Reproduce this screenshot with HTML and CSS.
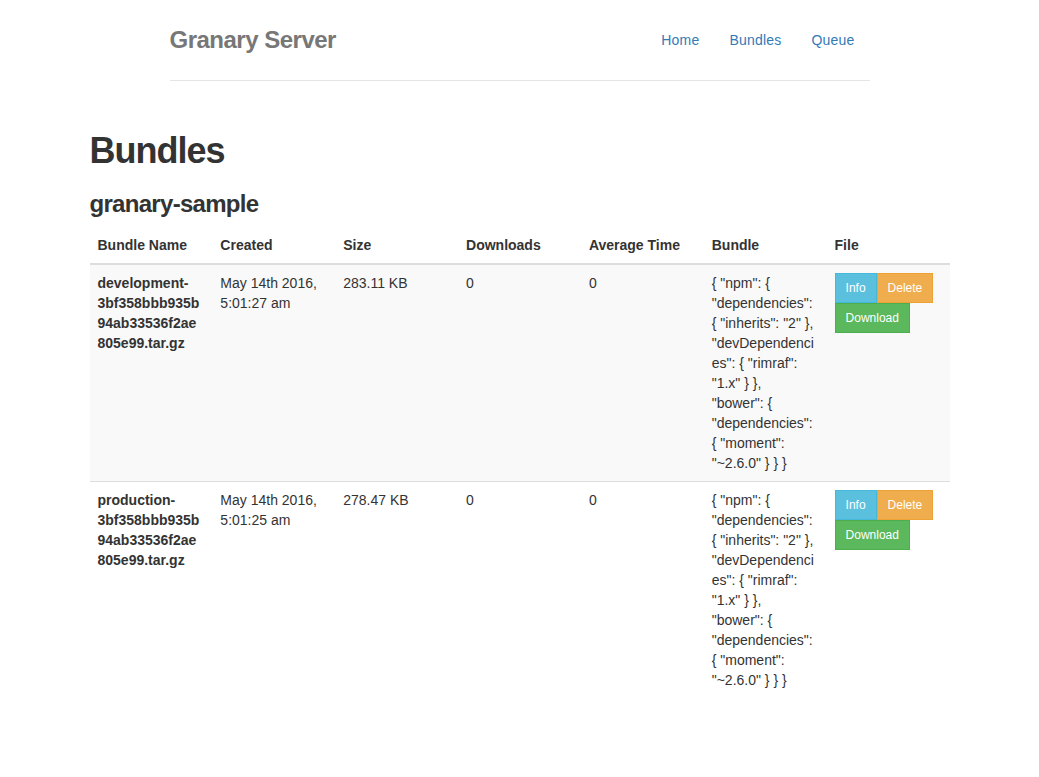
FILE: index.html
```html
<!DOCTYPE html>
<html lang="en">
<head>
<meta charset="utf-8">
<title>Granary Server</title>
<link rel="stylesheet" href="styles.css">
</head>
<body>
<div class="header-wrap">
  <header class="header">
    <h3 class="brand">Granary Server</h3>
    <nav class="nav">
      <a href="#">Home</a>
      <a href="#">Bundles</a>
      <a href="#">Queue</a>
    </nav>
  </header>
</div>
<main class="container">
  <h1 class="page-title">Bundles</h1>
  <h3 class="group-title">granary-sample</h3>
  <table class="table">
    <thead>
      <tr>
        <th>Bundle Name</th>
        <th>Created</th>
        <th>Size</th>
        <th>Downloads</th>
        <th>Average Time</th>
        <th>Bundle</th>
        <th>File</th>
      </tr>
    </thead>
    <tbody>
      <tr class="striped">
        <td class="name">development-3bf358bbb935b94ab33536f2ae805e99.tar.gz</td>
        <td>May 14th 2016, 5:01:27 am</td>
        <td>283.11 KB</td>
        <td>0</td>
        <td>0</td>
        <td class="json">{ "npm": { "dependencies": { "inherits": "2" }, "devDependencies": { "rimraf": "1.x" } }, "bower": { "dependencies": { "moment": "~2.6.0" } } }</td>
        <td>
          <div class="actions">
            <button class="btn btn-info">Info</button><button class="btn btn-warning">Delete</button><button class="btn btn-success">Download</button>
          </div>
        </td>
      </tr>
      <tr>
        <td class="name">production-3bf358bbb935b94ab33536f2ae805e99.tar.gz</td>
        <td>May 14th 2016, 5:01:25 am</td>
        <td>278.47 KB</td>
        <td>0</td>
        <td>0</td>
        <td class="json">{ "npm": { "dependencies": { "inherits": "2" }, "devDependencies": { "rimraf": "1.x" } }, "bower": { "dependencies": { "moment": "~2.6.0" } } }</td>
        <td>
          <div class="actions">
            <button class="btn btn-info">Info</button><button class="btn btn-warning">Delete</button><button class="btn btn-success">Download</button>
          </div>
        </td>
      </tr>
    </tbody>
  </table>
</main>
</body>
</html>
```

FILE: styles.css
```css
* { box-sizing: border-box; }

html, body {
  margin: 0;
  padding: 0;
}

body {
  padding-top: 20px;
  font-family: "Liberation Sans", Arial, Helvetica, sans-serif;
  font-size: 14px;
  line-height: 20px;
  color: #333;
  background: #fff;
}

.header-wrap {
  max-width: 730px;
  margin: 0 auto;
  padding: 0 15px;
}

.header {
  display: flex;
  justify-content: space-between;
  align-items: center;
  padding-bottom: 20px;
  border-bottom: 1px solid #e5e5e5;
  margin-bottom: 30px;
}

.brand {
  margin: 0;
  font-size: 24px;
  line-height: 40px;
  font-weight: bold;
  letter-spacing: -0.5px;
  color: #777;
}

.nav {
  display: flex;
}

.nav a {
  display: block;
  padding: 10px 15px;
  color: #337ab7;
  text-decoration: none;
  line-height: 20px;
  letter-spacing: 0.2px;
}

.container {
  display: flow-root;
  max-width: 890px;
  margin: 0 auto;
  padding: 0 15px;
}

.page-title {
  margin: 20px 0 10px;
  font-size: 36px;
  line-height: 1.1;
  font-weight: bold;
  letter-spacing: -1px;
}

.group-title {
  margin: 20px 0 10px;
  font-size: 24px;
  line-height: 1.1;
  font-weight: bold;
  letter-spacing: -0.7px;
}

.table {
  width: 100%;
  table-layout: fixed;
  border-collapse: collapse;
  border-spacing: 0;
  margin-bottom: 20px;
}

.table th,
.table td {
  padding: 8px;
  text-align: left;
  line-height: 20px;
  overflow-wrap: break-word;
  word-wrap: break-word;
}

.table th {
  vertical-align: bottom;
  font-weight: bold;
  border-bottom: 2px solid #ddd;
}

.table td {
  vertical-align: top;
}

.table td.name {
  font-weight: bold;
  padding-right: 11px;
}

.table td.json {
  padding-right: 10px;
}

.table tbody tr + tr td {
  border-top: 1px solid #ddd;
}

.table tr.striped td {
  background: #f9f9f9;
}

.actions {
  display: flex;
  flex-wrap: wrap;
}

.btn {
  display: inline-block;
  padding: 5px 10px;
  font-family: inherit;
  font-size: 12px;
  line-height: 18px;
  color: #fff;
  border: 1px solid transparent;
  border-radius: 0;
  cursor: pointer;
}

.btn-info { background: #5bc0de; border-color: #46b8da; }
.btn-warning { background: #f0ad4e; border-color: #eea236; }
.btn-success { background: #5cb85c; border-color: #4cae4c; }
```
